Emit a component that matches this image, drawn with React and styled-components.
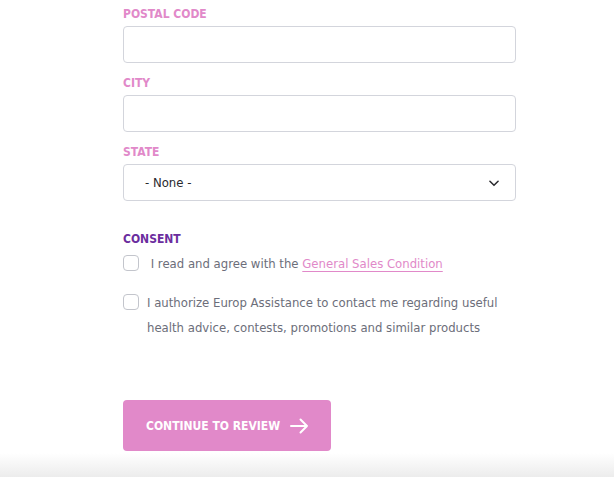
import React from "react"
import styled, { createGlobalStyle } from "styled-components"

const GlobalStyle = createGlobalStyle`
  html, body {
    margin: 0;
    padding: 0;
    background: #fff;
  }
  body {
    font-family: "DejaVu Sans Condensed", "Liberation Sans", sans-serif;
  }
`

const Page = styled.div`
  position: relative;
  width: 614px;
  height: 477px;
  overflow: hidden;
  &::after {
    content: "";
    position: absolute;
    left: 0;
    right: 0;
    bottom: 0;
    height: 24px;
    background: linear-gradient(to bottom, rgba(236, 236, 236, 0), #ececec);
  }
`

const Form = styled.form`
  width: 393px;
  padding: 6px 0 0 123px;
  display: flex;
  flex-direction: column;
`

const Field = styled.div`
  display: flex;
  flex-direction: column;
  margin-bottom: 12px;
`

const Label = styled.label`
  font-size: 12px;
  line-height: 17px;
  font-weight: 700;
  text-transform: uppercase;
  color: ${(p) => p.color || "#e189c9"};
  margin-bottom: 3px;
`

const Input = styled.input`
  box-sizing: border-box;
  height: 37px;
  width: 100%;
  border: 1px solid #d3d5dc;
  border-radius: 4px;
  background: #fff;
  outline: none;
`

const SelectBox = styled.div`
  box-sizing: border-box;
  height: 37px;
  border: 1px solid #d3d5dc;
  border-radius: 4px;
  display: flex;
  align-items: center;
  justify-content: space-between;
  padding: 0 14px 0 21px;
  font-size: 13px;
  color: #2a2a2e;
`

const Consent = styled.div`
  margin-top: 18px;
  display: flex;
  flex-direction: column;
`

const CheckRow = styled.label`
  display: flex;
  align-items: flex-start;
  gap: 8px;
  font-size: 13px;
  line-height: 25px;
  color: #6c6e7a;
  margin-bottom: ${(p) => p.gap || 0}px;
`

const Box = styled.span`
  flex: none;
  box-sizing: border-box;
  width: 16px;
  height: 16px;
  margin-top: 4px;
  border: 1px solid #c3c5cc;
  border-radius: 4px;
  background: #fff;
`

const Link = styled.a`
  color: #e189c9;
  text-decoration: underline;
  text-underline-offset: 3px;
`

const Button = styled.button`
  align-self: flex-start;
  margin-top: 60px;
  height: 51px;
  padding: 0 22px 0 23px;
  border: none;
  border-radius: 4px;
  background: #e189c9;
  color: #fff;
  font-family: inherit;
  font-size: 12px;
  font-weight: 700;
  text-transform: uppercase;
  display: flex;
  align-items: center;
  gap: 10px;
`

const Chevron = () => (
  <svg width="14" height="14" viewBox="0 0 24 24" fill="none" stroke="#2a2a2e" strokeWidth="2.6" strokeLinecap="round" strokeLinejoin="round">
    <path d="M5 9l7 7 7-7" />
  </svg>
)

const Arrow = () => (
  <svg width="19" height="16" viewBox="0 0 19 16" fill="none" stroke="#fff" strokeWidth="2" strokeLinecap="round" strokeLinejoin="round">
    <path d="M1 8h16M10.5 1.5L17 8l-6.5 6.5" />
  </svg>
)

export default function App() {
  return (
    <Page>
      <GlobalStyle />
      <Form onSubmit={(e) => e.preventDefault()}>
        <Field>
          <Label>Postal code</Label>
          <Input />
        </Field>
        <Field>
          <Label>City</Label>
          <Input />
        </Field>
        <Field>
          <Label>State</Label>
          <SelectBox>
            <span>- None -</span>
            <Chevron />
          </SelectBox>
        </Field>
        <Consent>
          <Label color="#6b2d9e">Consent</Label>
          <CheckRow gap={14}>
            <Box />
            <span>
              &nbsp;I read and agree with the <Link href="#">General Sales Condition</Link>
            </span>
          </CheckRow>
          <CheckRow>
            <Box />
            <span>
              I authorize Europ Assistance to contact me regarding useful health advice, contests, promotions and similar products
            </span>
          </CheckRow>
        </Consent>
        <Button type="submit">
          Continue to review
          <Arrow />
        </Button>
      </Form>
    </Page>
  )
}
